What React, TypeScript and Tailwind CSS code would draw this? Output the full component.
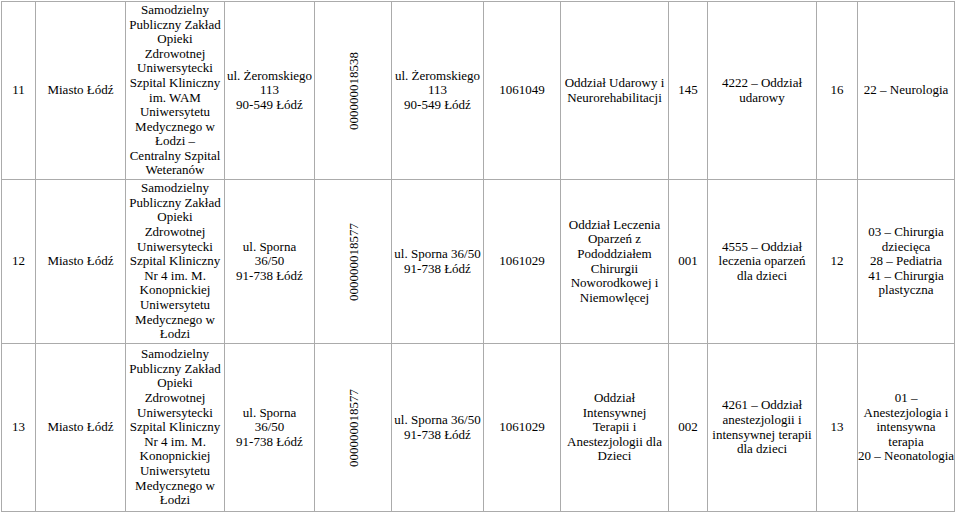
import React from "react";

const L = (...lines: string[]) => (
  <>
    {lines.map((l, i) => (
      <React.Fragment key={i}>
        {i > 0 && <br />}
        {l}
      </React.Fragment>
    ))}
  </>
);

const widths = [34, 90, 99, 90, 77, 92, 77, 108, 39, 109, 41, 97];

type Row = {
  h: number;
  cells: React.ReactNode[];
  code: string;
};

const szpital4 = L(
  "Samodzielny",
  "Publiczny Zakład",
  "Opieki",
  "Zdrowotnej",
  "Uniwersytecki",
  "Szpital Kliniczny",
  "Nr 4 im. M.",
  "Konopnickiej",
  "Uniwersytetu",
  "Medycznego w",
  "Łodzi"
);

const rows: Row[] = [
  {
    h: 178,
    code: "000000018538",
    cells: [
      "11",
      "Miasto Łódź",
      L(
        "Samodzielny",
        "Publiczny Zakład",
        "Opieki",
        "Zdrowotnej",
        "Uniwersytecki",
        "Szpital Kliniczny",
        "im. WAM",
        "Uniwersytetu",
        "Medycznego w",
        "Łodzi –",
        "Centralny Szpital",
        "Weteranów"
      ),
      L("ul. Żeromskiego", "113", "90-549 Łódź"),
      null,
      L("ul. Żeromskiego", "113", "90-549 Łódź"),
      "1061049",
      L("Oddział Udarowy i", "Neurorehabilitacji"),
      "145",
      L("4222 – Oddział", "udarowy"),
      "16",
      "22 – Neurologia",
    ],
  },
  {
    h: 164,
    code: "000000018577",
    cells: [
      "12",
      "Miasto Łódź",
      szpital4,
      L("ul. Sporna", "36/50", "91-738 Łódź"),
      null,
      L("ul. Sporna 36/50", "91-738 Łódź"),
      "1061029",
      L("Oddział Leczenia", "Oparzeń z", "Pododdziałem", "Chirurgii", "Noworodkowej i", "Niemowlęcej"),
      "001",
      L("4555 – Oddział", "leczenia oparzeń", "dla dzieci"),
      "12",
      L("03 – Chirurgia", "dziecięca", "28 – Pediatria", "41 – Chirurgia", "plastyczna"),
    ],
  },
  {
    h: 168,
    code: "000000018577",
    cells: [
      "13",
      "Miasto Łódź",
      szpital4,
      L("ul. Sporna", "36/50", "91-738 Łódź"),
      null,
      L("ul. Sporna 36/50", "91-738 Łódź"),
      "1061029",
      L("Oddział", "Intensywnej", "Terapii i", "Anestezjologii dla", "Dzieci"),
      "002",
      L("4261 – Oddział", "anestezjologii i", "intensywnej terapii", "dla dzieci"),
      "13",
      L("01 –", "Anestezjologia i", "intensywna", "terapia", "20 – Neonatologia"),
    ],
  },
];

export default function App() {
  return (
    <div className="w-[960px] h-[514px] bg-white pl-[1px] pt-[1px] overflow-hidden font-['Liberation_Serif','Times_New_Roman',serif]">
      <table className="border-collapse table-fixed text-[13px] leading-[14.6px] text-black font-['Liberation_Serif','Times_New_Roman',serif]">
        <colgroup>
          {widths.map((w, i) => (
            <col key={i} style={{ width: w }} />
          ))}
        </colgroup>
        <tbody>
          {rows.map((r, ri) => (
            <tr key={ri} style={{ height: r.h }}>
              {r.cells.map((c, ci) =>
                ci === 4 ? (
                  <td key={ci} className="border border-[#ababab] p-0 align-middle text-center">
                    <div className="flex items-center justify-center h-full pl-[3px]">
                      <span className="[writing-mode:vertical-rl] rotate-180 whitespace-nowrap">{r.code}</span>
                    </div>
                  </td>
                ) : (
                  <td
                    key={ci}
                    className="border border-[#ababab] px-0 py-0 align-middle text-center whitespace-nowrap"
                  >
                    {c}
                  </td>
                )
              )}
            </tr>
          ))}
        </tbody>
      </table>
    </div>
  );
}
